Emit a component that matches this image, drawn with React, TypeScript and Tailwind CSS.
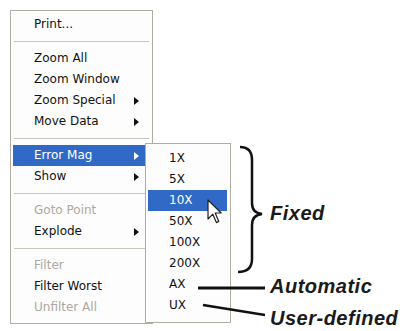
import { Fragment } from 'react'

type Item = { label: string; sub?: boolean; disabled?: boolean; active?: boolean }

const groups: Item[][] = [
  [{ label: 'Print...' }],
  [
    { label: 'Zoom All' },
    { label: 'Zoom Window' },
    { label: 'Zoom Special', sub: true },
    { label: 'Move Data', sub: true },
  ],
  [
    { label: 'Error Mag', sub: true, active: true },
    { label: 'Show', sub: true },
  ],
  [
    { label: 'Goto Point', disabled: true },
    { label: 'Explode', sub: true },
  ],
  [
    { label: 'Filter', disabled: true },
    { label: 'Filter Worst' },
    { label: 'Unfilter All', disabled: true },
  ],
]

const mags = ['1X', '5X', '10X', '50X', '100X', '200X', 'AX', 'UX']

const Arrow = ({ white }: { white?: boolean }) => (
  <svg width="5" height="8" viewBox="0 0 5 8" className="shrink-0">
    <path d="M0 0 L5 4 L0 8 Z" fill={white ? '#ffffff' : '#111111'} />
  </svg>
)

const MenuRow = ({ item }: { item: Item }) => {
  const tone = item.active
    ? 'bg-[#3169c6] text-white'
    : item.disabled
      ? 'text-[#aca89f]'
      : 'text-[#111]'
  return (
    <div className={`mx-[2px] h-[21px] flex items-center justify-between pl-[21px] pr-[11px] ${tone}`}>
      <span>{item.label}</span>
      {item.sub && <Arrow white={item.active} />}
    </div>
  )
}

const Separator = () => (
  <div className="h-[13px] flex items-center px-[3px]">
    <div className="h-px w-full bg-[#c8c5bc]" />
  </div>
)

export default function App() {
  return (
    <div
      className="relative w-[403px] h-[331px] bg-white overflow-hidden pl-[10px] pt-[10px] text-[12px] leading-[21px]"
      style={{ fontFamily: '"DejaVu Sans", Tahoma, sans-serif' }}
    >
      {/* main context menu */}
      <div className="w-[143px] border border-[#b0ada3] bg-[#fdfdfd] pt-[3px] pb-[5px]">
        {groups.map((g, i) => (
          <Fragment key={i}>
            {i > 0 && <Separator />}
            {g.map((item) => (
              <MenuRow key={item.label} item={item} />
            ))}
          </Fragment>
        ))}
      </div>

      {/* Error Mag submenu */}
      <div className="absolute left-[145px] top-[143px] w-[86px] border border-[#b0ada3] bg-[#fdfdfd] pt-[4px] pb-[6px]">
        {mags.map((m) => (
          <div
            key={m}
            className={`ml-[2px] mr-[3px] h-[21px] flex items-center pl-[21px] ${
              m === '10X' ? 'bg-[#3169c6] text-white' : 'text-[#111]'
            }`}
          >
            {m}
          </div>
        ))}
      </div>

      {/* brace, leader lines and mouse pointer */}
      <svg className="absolute left-0 top-0" width="403" height="331" viewBox="0 0 403 331">
        <path
          d="M240 147 Q252 147 252 160 L252 203 Q252 213 262 214 Q252 215 252 225 L252 259 Q252 272 238 272"
          fill="none"
          stroke="#111"
          strokeWidth="2.5"
        />
        <line x1="198" y1="288" x2="265" y2="288" stroke="#111" strokeWidth="3" />
        <line x1="203" y1="305" x2="265" y2="315" stroke="#111" strokeWidth="2.5" />
        <path
          d="M208 200 L208 219 L212.8 214.2 L216.4 222.6 L218.8 221.4 L215.2 213 L221.2 213 Z"
          fill="#fff"
          stroke="#222"
          strokeWidth="1.2"
          strokeLinejoin="round"
        />
      </svg>

      {/* callout labels */}
      <div
        className="absolute left-[270px] top-[201px] flex flex-col text-[20px] leading-[24px] font-bold italic tracking-[0.5px] text-[#1a1a1a]"
        style={{ fontFamily: '"Liberation Sans", Arial, sans-serif' }}
      >
        <span>Fixed</span>
        <span className="mt-[49px]">Automatic</span>
        <span className="mt-[8px]">User-defined</span>
      </div>
    </div>
  )
}
